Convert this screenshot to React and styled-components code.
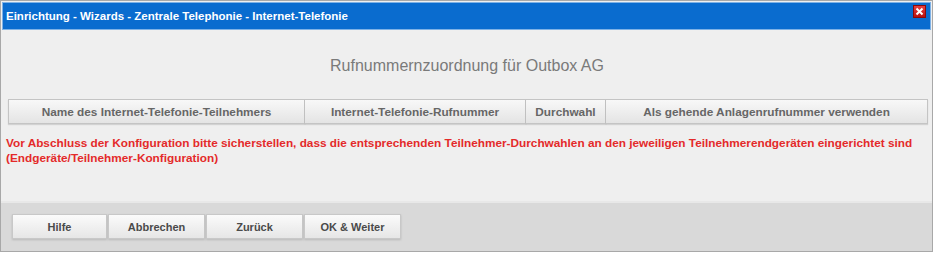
import React from "react";
import styled, { createGlobalStyle } from "styled-components";

const Global = createGlobalStyle`
  html, body { margin: 0; padding: 0; background: #fff; }
  body { font-family: "Liberation Sans", Arial, sans-serif; }
`;

const Window = styled.div`
  width: 933px;
  height: 252px;
  border: 1px solid #a8a8a8;
  background: #efefef;
  display: flex;
  flex-direction: column;
  box-sizing: border-box;
`;

const TitleBar = styled.div`
  height: 28px;
  margin: 1px 1px 0 1px;
  background: #0a6ccf;
  border: 1px solid #7fb2e6;
  box-sizing: border-box;
  display: flex;
  align-items: center;
  justify-content: space-between;
  padding: 0 4px 0 3px;
  flex-shrink: 0;
`;

const TitleText = styled.span`
  color: #fff;
  font-weight: bold;
  font-size: 11.5px;
`;

const CloseBtn = styled.div`
  width: 13px;
  height: 13px;
  background: linear-gradient(#e84040, #b81010);
  border: 1px solid #8a0a0a;
  box-sizing: border-box;
  align-self: flex-start;
  margin-top: 2px;
  display: flex;
  align-items: center;
  justify-content: center;
`;

const Body = styled.div`
  flex: 1;
  display: flex;
  flex-direction: column;
  padding: 0 4px 0 5px;
`;

const Heading = styled.div`
  text-align: center;
  color: #7a7a7a;
  font-size: 16px;
  margin-top: 27px;
  height: 18px;
  line-height: 18px;
`;

const HeaderRow = styled.div`
  margin-top: 24px;
  display: grid;
  grid-template-columns: 297px 221px 80px 1fr;
  height: 25px;
  margin-left: 2px;
`;

const HeaderCell = styled.div`
  background: linear-gradient(#f8f8f8, #e4e4e4);
  border: 1px solid #c4c4c4;
  border-left-width: ${(p) => (p.first ? "1px" : "0")};
  box-sizing: border-box;
  display: flex;
  align-items: center;
  justify-content: center;
  color: #666;
  font-weight: bold;
  font-size: 11.8px;
  box-shadow: 0 1px 1px rgba(0, 0, 0, 0.12);
`;

const Warning = styled.div`
  margin-top: 12px;
  color: #e42a2a;
  font-weight: bold;
  font-size: 11.8px;
  line-height: 14.5px;
  white-space: nowrap;
`;

const Footer = styled.div`
  height: 50px;
  background: #d9d9d9;
  border-top: 2px solid #e8e8e8;
  box-sizing: border-box;
  display: flex;
  align-items: center;
  gap: 1px;
  padding: 0 0 0 11px;
  flex-shrink: 0;
`;

const Button = styled.div`
  width: ${(p) => p.w}px;
  height: 25px;
  box-sizing: border-box;
  background: linear-gradient(#fbfbfb, #e6e6e6);
  border: 1px solid #c8c8c8;
  box-shadow: 0 1px 2px rgba(0, 0, 0, 0.15);
  display: flex;
  align-items: center;
  justify-content: center;
  color: #4a4a4a;
  font-weight: bold;
  font-size: 11px;
  margin-bottom: 1px;
`;

export default function App() {
  return (
    <>
      <Global />
      <Window>
        <TitleBar>
          <TitleText>Einrichtung - Wizards - Zentrale Telephonie - Internet-Telefonie</TitleText>
          <CloseBtn>
            <svg width="9" height="9" viewBox="0 0 9 9">
              <path d="M1.5 1.5 L7.5 7.5 M7.5 1.5 L1.5 7.5" stroke="#fff" strokeWidth="2" />
            </svg>
          </CloseBtn>
        </TitleBar>
        <Body>
          <Heading>Rufnummernzuordnung für Outbox AG</Heading>
          <HeaderRow>
            <HeaderCell first>Name des Internet-Telefonie-Teilnehmers</HeaderCell>
            <HeaderCell>Internet-Telefonie-Rufnummer</HeaderCell>
            <HeaderCell>Durchwahl</HeaderCell>
            <HeaderCell>Als gehende Anlagenrufnummer verwenden</HeaderCell>
          </HeaderRow>
          <Warning>
            Vor Abschluss der Konfiguration bitte sicherstellen, dass die entsprechenden Teilnehmer-Durchwahlen an den jeweiligen Teilnehmerendgeräten eingerichtet sind
            <br />
            (Endgeräte/Teilnehmer-Konfiguration)
          </Warning>
        </Body>
        <Footer>
          <Button w={95}>Hilfe</Button>
          <Button w={97}>Abbrechen</Button>
          <Button w={97}>Zurück</Button>
          <Button w={97}>OK &amp; Weiter</Button>
        </Footer>
      </Window>
    </>
  );
}
